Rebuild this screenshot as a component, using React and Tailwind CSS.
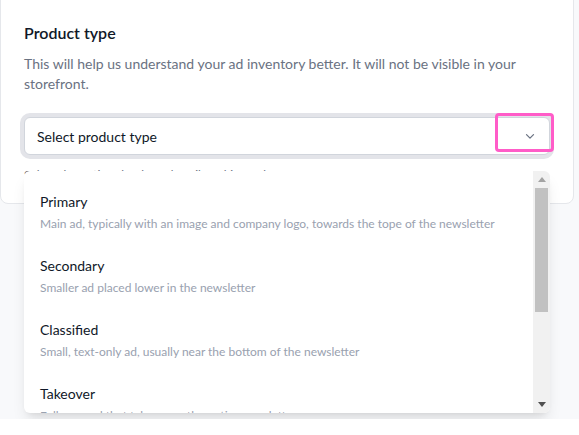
const options = [
  {
    title: "Primary",
    desc: "Main ad, typically with an image and company logo, towards the tope of the newsletter",
  },
  { title: "Secondary", desc: "Smaller ad placed lower in the newsletter" },
  {
    title: "Classified",
    desc: "Small, text-only ad, usually near the bottom of the newsletter",
  },
  { title: "Takeover", desc: "Full page ad that takes over the entire newsletter" },
  { title: "Sponsored link", desc: "A single sponsored link placed inside the content" },
  { title: "Dedicated send", desc: "A whole newsletter send dedicated to one sponsor" },
];

export default function App() {
  return (
    <div
      className="min-h-[435px] bg-[#f8f9fb] text-gray-900"
      style={{ fontFamily: "Lato, 'Liberation Sans', sans-serif" }}
    >
      <div className="w-[574px] -mt-4 pt-[36px] px-[23px] pb-5 bg-white border border-gray-200 rounded-lg">
        <h2 className="text-[16px] leading-6 font-semibold text-gray-900">Product type</h2>
        <p className="mt-[9px] text-[14px] leading-5 text-gray-500">
          This will help us understand your ad inventory better. It will not be visible in your
          storefront.
        </p>

        <div className="relative mt-[23px] w-[526px]">
          <button className="flex w-full h-[38px] items-center justify-between pl-[12px] pr-[12px] bg-white border border-gray-300 rounded-md ring-4 ring-[#e3e4e9] text-[14px] text-gray-900">
            <span>Select product type</span>
            <svg width="14" height="14" viewBox="0 0 20 20" fill="none" className="text-gray-500">
              <path d="M5 8l5 5 5-5" stroke="currentColor" strokeWidth="1.8" strokeLinecap="round" strokeLinejoin="round" />
            </svg>
          </button>
          <div className="absolute -top-1 left-[471px] w-[59px] h-[39px] border-[3px] border-[#ff5cc8] rounded-sm" />

          <p className="mt-3 text-[12px] leading-4 text-gray-500">
            Select the option that best describes this product
          </p>

          {/* dropdown */}
          <div className="absolute top-[54px] left-0 w-[526px] h-[242px] overflow-hidden bg-white rounded-md shadow-lg">
            <ul className="pt-[9px] pr-[17px]">
              {options.map((o) => (
                <li key={o.title} className="px-4 py-3">
                  <div className="text-[14px] leading-5 text-gray-900">{o.title}</div>
                  <div className="mt-1 text-[12px] leading-4 text-gray-400 whitespace-nowrap">{o.desc}</div>
                </li>
              ))}
            </ul>

            {/* scrollbar */}
            <div className="absolute top-0 right-0 bottom-0 w-[17px] flex flex-col bg-[#f1f1f1]">
              <div className="h-[17px] flex items-center justify-center">
                <svg width="8" height="5" viewBox="0 0 8 5">
                  <path d="M0 5L4 0L8 5Z" fill="#a3a3a3" />
                </svg>
              </div>
              <div className="mx-[2px] h-[124px] bg-[#c1c1c1]" />
              <div className="flex-1" />
              <div className="h-[17px] flex items-center justify-center">
                <svg width="8" height="5" viewBox="0 0 8 5">
                  <path d="M0 0L8 0L4 5Z" fill="#505050" />
                </svg>
              </div>
            </div>
          </div>
        </div>
      </div>
    </div>
  );
}
